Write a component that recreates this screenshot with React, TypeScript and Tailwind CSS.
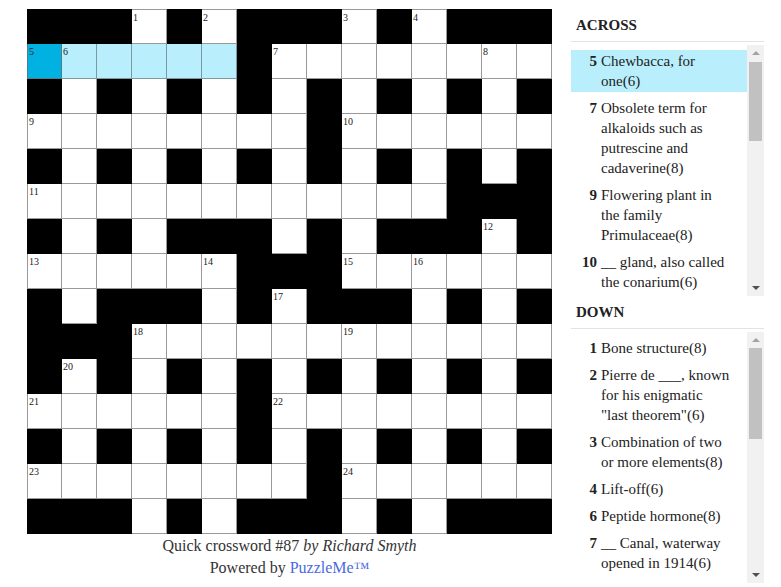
import React from 'react';

const layout = [
  "BBB.B.BBB.B.BBB",
  "......B........",
  "B.B.B.B.B.B.B.B",
  "........B......",
  "B.B.B.B.B.B.B.B",
  "............BBB",
  "B.B.BBB.B.BBB.B",
  "......BBB......",
  "B.BBB.B.BBB.B.B",
  "BBB............",
  "B.B.B.B.B.B.B.B",
  "......B........",
  "B.B.B.B.B.B.B.B",
  "........B......",
  "BBB.B.BBB.B.BBB",
];

interface Clue {
  num: number;
  text: string;
}

const across: Clue[] = [
  { num: 5, text: "Chewbacca, for one(6)" },
  { num: 7, text: "Obsolete term for alkaloids such as putrescine and cadaverine(8)" },
  { num: 9, text: "Flowering plant in the family Primulaceae(8)" },
  { num: 10, text: "__ gland, also called the conarium(6)" },
];

const down: Clue[] = [
  { num: 1, text: "Bone structure(8)" },
  { num: 2, text: 'Pierre de ___, known for his enigmatic "last theorem"(6)' },
  { num: 3, text: "Combination of two or more elements(8)" },
  { num: 4, text: "Lift-off(6)" },
  { num: 6, text: "Peptide hormone(8)" },
  { num: 7, text: "__ Canal, waterway opened in 1914(6)" },
];

const isWhite = (r: number, c: number) =>
  r >= 0 && r < 15 && c >= 0 && c < 15 && layout[r][c] === '.';

// number the cells the usual way: start of an across or down entry
const numbers: Record<string, number> = {};
let n = 1;
for (let r = 0; r < 15; r++) {
  for (let c = 0; c < 15; c++) {
    if (!isWhite(r, c)) continue;
    const startsAcross = !isWhite(r, c - 1) && isWhite(r, c + 1);
    const startsDown = !isWhite(r - 1, c) && isWhite(r + 1, c);
    if (startsAcross || startsDown) numbers[`${r}-${c}`] = n++;
  }
}

const Grid = () => (
  <div className="grid grid-cols-[repeat(15,35px)] grid-rows-[repeat(15,35px)] w-[525px]">
    {layout.map((row, r) =>
      row.split('').map((ch, c) => {
        const black = ch === 'B';
        const active = r === 1 && c === 0;
        const word = r === 1 && c > 0 && c <= 5;
        const num = numbers[`${r}-${c}`];
        let cls = 'relative box-border border-r border-b ';
        if (black) cls += 'bg-black border-black';
        else if (active) cls += 'bg-[#00b1e1] border-[#4f7d8c]';
        else if (word) cls += 'bg-[#b9effd] border-[#7d9aa4]';
        else cls += 'bg-white border-[#999999]';
        if (!black && c === 0) cls += ' border-l';
        if (!black && r === 0) cls += ' border-t';
        return (
          <div key={`${r}-${c}`} className={cls}>
            {num && (
              <span className="absolute top-[3px] left-[1px] text-[10px] leading-none text-[#222]">
                {num}
              </span>
            )}
          </div>
        );
      })
    )}
  </div>
);

const Scrollbar = ({ thumbTop, thumbHeight }: { thumbTop: number; thumbHeight: number }) => (
  <div className="relative w-[17px] h-full bg-[#f1f1f1] shrink-0">
    <div className="absolute top-[6px] left-[5px] w-0 h-0 border-l-[4px] border-r-[4px] border-b-[4px] border-l-transparent border-r-transparent border-b-[#a3a3a3]" />
    <div
      className="absolute left-[2px] w-[13px] bg-[#c1c1c1]"
      style={{ top: thumbTop, height: thumbHeight }}
    />
    <div className="absolute bottom-[6px] left-[5px] w-0 h-0 border-l-[4px] border-r-[4px] border-t-[4px] border-l-transparent border-r-transparent border-t-[#505050]" />
  </div>
);

const ClueList = ({
  title,
  clues,
  activeNum,
  thumbTop,
  thumbHeight,
  first,
}: {
  title: string;
  clues: Clue[];
  activeNum?: number;
  thumbTop: number;
  thumbHeight: number;
  first?: boolean;
}) => (
  <div>
    <div
      className={`${first ? 'pt-[15px]' : 'pt-[6px]'} pb-[6px] px-[5px] border-b border-[#e3e3e3] text-[15px] leading-5 font-bold text-[#222]`}
    >
      {title}
    </div>
    <div className="mt-[3px] h-[251px] flex">
      <div className="w-[176px] overflow-hidden pt-[5px]">
        {clues.map((clue) => (
          <div
            key={clue.num}
            className={`flex py-px mb-[5px] text-[15px] leading-5 text-[#222] ${
              clue.num === activeNum ? 'bg-[#b9effd]' : ''
            }`}
          >
            <span className="w-[26px] shrink-0 text-right font-bold">{clue.num}</span>
            <span className="w-[130px] ml-[4px]">{clue.text}</span>
          </div>
        ))}
      </div>
      <Scrollbar thumbTop={thumbTop} thumbHeight={thumbHeight} />
    </div>
  </div>
);

const App = () => {
  return (
    <div className="w-[781px] h-[587px] bg-white flex pl-[27px] font-['Liberation_Serif',serif] overflow-hidden">
      <div className="flex flex-col items-center w-[525px] mt-[9px]">
        <Grid />
        <div className="mt-[1px] text-center text-[16px] leading-[22px] text-[#333]">
          <div>
            Quick crossword #87 <i>by Richard Smyth</i>
          </div>
          <div>
            Powered by <span className="text-[#4a6ae0]">PuzzleMe™</span>
          </div>
        </div>
      </div>
      <div className="ml-[19px] w-[193px]">
        <ClueList title="ACROSS" clues={across} activeNum={5} thumbTop={17} thumbHeight={79} first />
        <ClueList title="DOWN" clues={down} thumbTop={16} thumbHeight={91} />
      </div>
    </div>
  );
};

export default App;
